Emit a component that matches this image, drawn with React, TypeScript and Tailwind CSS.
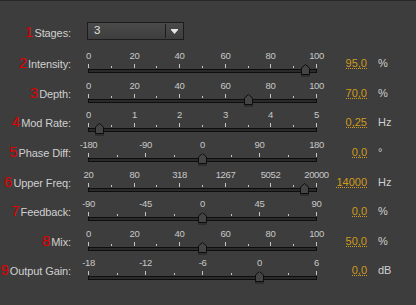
import React from 'react';

type Row = {
  n: number;
  label: string;
  ticks: string[];
  pos: number;
  value: string;
  unit: string;
  h: string;
};

const pct = ['0', '20', '40', '60', '80', '100'];

const rows: Row[] = [
  { n: 2, label: 'Intensity:', ticks: pct, pos: 0.95, value: '95,0', unit: '%', h: 'h-[30px]' },
  { n: 3, label: 'Depth:', ticks: pct, pos: 0.7, value: '70,0', unit: '%', h: 'h-[29px]' },
  { n: 4, label: 'Mod Rate:', ticks: ['0', '1', '2', '3', '4', '5'], pos: 0.05, value: '0,25', unit: 'Hz', h: 'h-[30px]' },
  { n: 5, label: 'Phase Diff:', ticks: ['-180', '-90', '0', '90', '180'], pos: 0.5, value: '0,0', unit: '°', h: 'h-[30px]' },
  { n: 6, label: 'Upper Freq:', ticks: ['20', '80', '318', '1267', '5052', '20000'], pos: 0.948, value: '14000', unit: 'Hz', h: 'h-[29px]' },
  { n: 7, label: 'Feedback:', ticks: ['-90', '-45', '0', '45', '90'], pos: 0.5, value: '0,0', unit: '%', h: 'h-[30px]' },
  { n: 8, label: 'Mix:', ticks: pct, pos: 0.5, value: '50,0', unit: '%', h: 'h-[29px]' },
  { n: 9, label: 'Output Gain:', ticks: ['-18', '-12', '-6', '0', '6'], pos: 0.75, value: '0,0', unit: 'dB', h: 'h-[30px]' },
];

const W = 228;

function Label({ n, text }: { n: number; text: string }) {
  return (
    <div className="w-[71px] shrink-0 flex justify-end items-baseline gap-[1px] whitespace-nowrap">
      <span className="text-[15px] leading-none text-[#e00000]">{n}</span>
      <span className="text-[11px] leading-none tracking-[-0.1px] text-[#d0d0d0]">{text}</span>
    </div>
  );
}

function Thumb() {
  return (
    <svg width="9" height="13" viewBox="0 0 9 13" className="block">
      <rect x="0" y="10" width="9" height="3" fill="#2e2e2e" />
      <path d="M0.5 4 L4.5 0.5 L8.5 4 L8.5 10.5 L0.5 10.5 Z" fill="#444" stroke="#0d0d0d" strokeWidth="1" />
    </svg>
  );
}

function Slider({ ticks, pos }: { ticks: string[]; pos: number }) {
  const steps = (ticks.length - 1) * 2;
  return (
    <div className="w-[229px] shrink-0 ml-[17px]">
      <div className="relative h-[14px]">
        {ticks.map((t, i) => (
          <div
            key={i}
            className="absolute top-[1px] w-0 flex justify-center"
            style={{ left: Math.round((i / (ticks.length - 1)) * W) + 0.5 }}
          >
            <span className="text-[9.5px] leading-none tracking-[-0.4px] text-[#c8c8c8] whitespace-nowrap">{t}</span>
          </div>
        ))}
      </div>
      <div className="relative h-[4px]">
        {Array.from({ length: steps + 1 }).map((_, i) => (
          <div
            key={i}
            className={`absolute bottom-0 w-px bg-[#c4c4c4] ${i % 2 === 0 ? 'h-[4px]' : 'h-[2px]'}`}
            style={{ left: Math.round((i / steps) * W) }}
          />
        ))}
      </div>
      <div className="relative mt-[1px] h-[4px] border border-[#0e0e0e] bg-[#2a2a2a]">
        <div className="absolute top-[-6px]" style={{ left: Math.round(pos * W) - 5 }}>
          <Thumb />
        </div>
      </div>
    </div>
  );
}

export default function App() {
  return (
    <div
      className="w-[416px] h-[305px] bg-[#3d3d3d] border-t border-[#262626] overflow-hidden"
      style={{ fontFamily: '"Liberation Sans", Arial, sans-serif' }}
    >
      <div className="flex items-start pt-[21px] h-[49px]">
        <div className="mt-[2px]">
          <Label n={1} text="Stages:" />
        </div>
        <div className="ml-[16px] w-[97px] h-[18px] border border-[#1c1c1c] bg-gradient-to-b from-[#4a4a4a] to-[#3e3e3e] flex items-center">
          <span className="flex-1 pl-[6px] text-[11.5px] leading-none text-[#e0e0e0]">3</span>
          <div className="w-px h-[14px] bg-[#1c1c1c]" />
          <div className="w-[17px] flex justify-center">
            <svg width="7" height="5" viewBox="0 0 7 5">
              <rect x="0" y="0" width="7" height="1" fill="#e6e6e6" />
              <path d="M0 1 H7 L3.5 5 Z" fill="#e6e6e6" />
            </svg>
          </div>
        </div>
      </div>
      {rows.map((r) => (
        <div key={r.n} className={`flex items-start ${r.h}`}>
          <div className="mt-[5px]">
            <Label n={r.n} text={r.label} />
          </div>
          <Slider ticks={r.ticks} pos={r.pos} />
          <div className="w-[50px] shrink-0 flex justify-end mt-[8px]">
            <span className="text-[11px] leading-[10px] text-[#d09a1a] border-b border-dotted border-[#d09a1a]">{r.value}</span>
          </div>
          <span className="ml-[11px] mt-[8px] text-[11px] leading-[10px] text-[#d0d0d0]">{r.unit}</span>
        </div>
      ))}
    </div>
  );
}
